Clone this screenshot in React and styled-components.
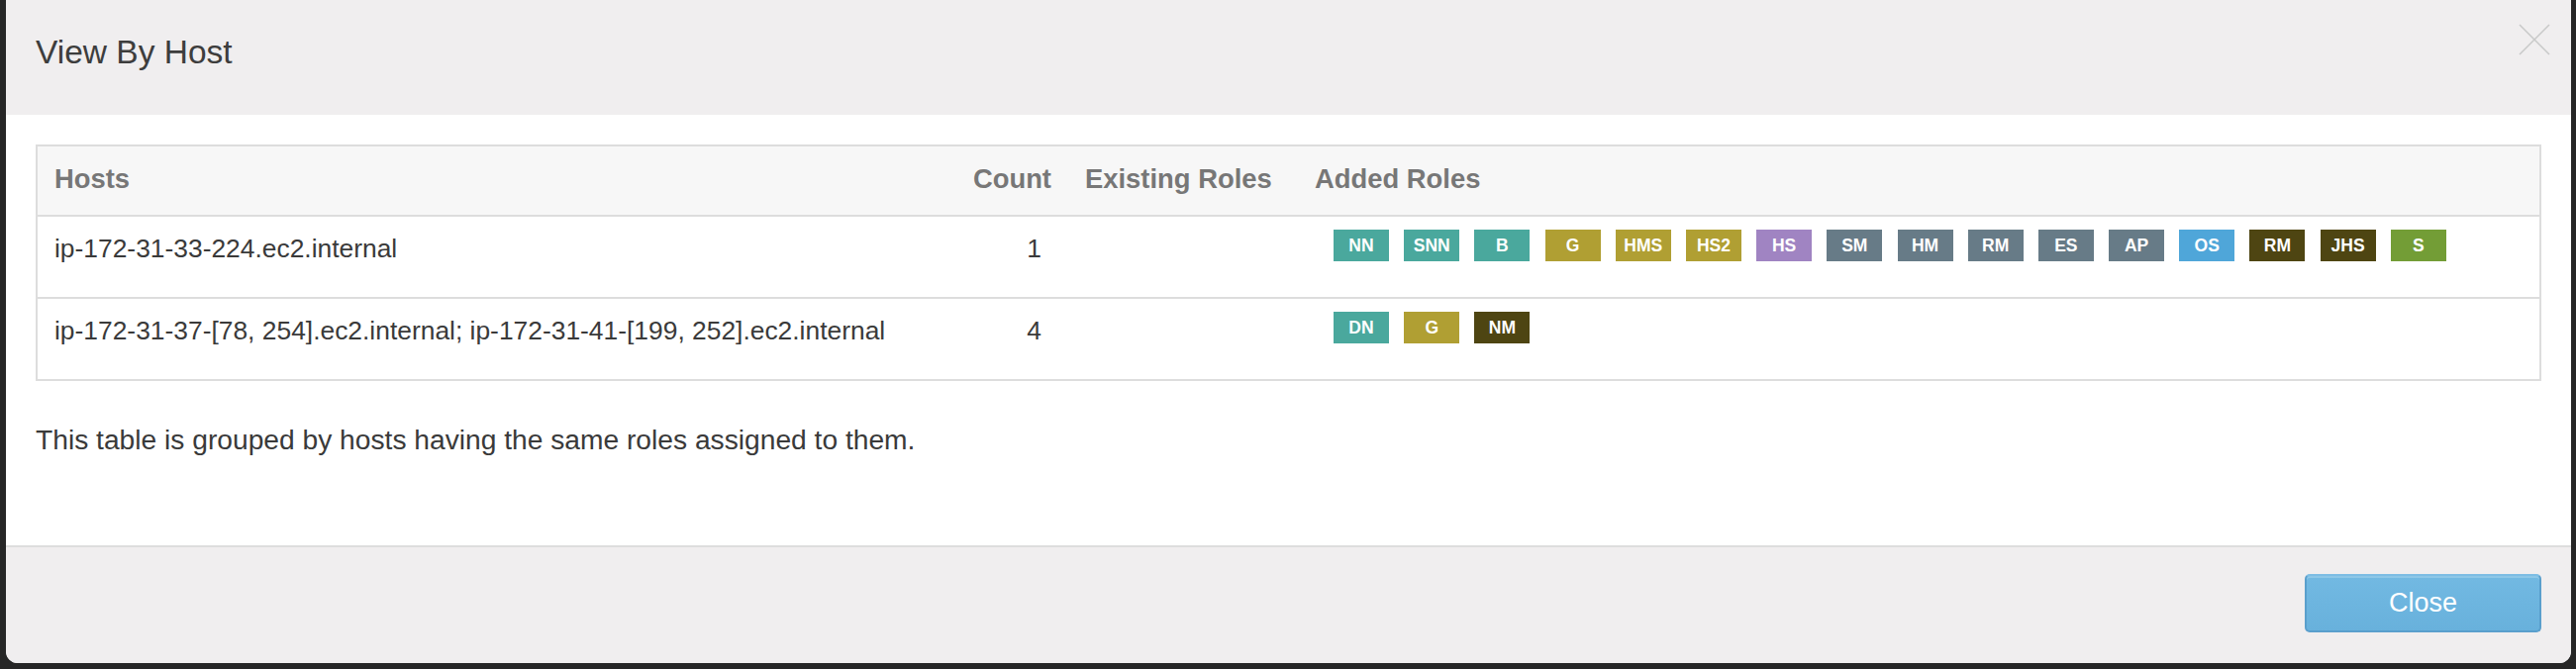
import React from "react";
import styled, { createGlobalStyle } from "styled-components";

const GlobalStyle = createGlobalStyle`
  html, body {
    margin: 0;
    padding: 0;
    background: #262626;
  }
  body {
    font-family: "Liberation Sans", Arial, Helvetica, sans-serif;
  }
`;

const hosts = [
  {
    name: "ip-172-31-33-224.ec2.internal",
    count: 1,
    existing: [],
    added: [
      ["NN", "teal"], ["SNN", "teal"], ["B", "teal"], ["G", "olive"],
      ["HMS", "olive"], ["HS2", "olive"], ["HS", "purple"], ["SM", "slate"],
      ["HM", "slate"], ["RM", "slate"], ["ES", "slate"], ["AP", "slate"],
      ["OS", "blue"], ["RM", "dark"], ["JHS", "dark"], ["S", "green"],
    ],
  },
  {
    name: "ip-172-31-37-[78, 254].ec2.internal; ip-172-31-41-[199, 252].ec2.internal",
    count: 4,
    existing: [],
    added: [["DN", "teal"], ["G", "olive"], ["NM", "dark"]],
  },
];

const roleColors = {
  teal: "#4aa89d",
  olive: "#b09f33",
  purple: "#a084c2",
  slate: "#677b87",
  blue: "#4fa6d9",
  dark: "#4e4512",
  green: "#739d36",
};

const App = () => {
  return (
    <>
      <GlobalStyle />
      <Modal>
        <Header>
          <Title>View By Host</Title>
          <CloseX aria-label="close">
            <svg width="32" height="32" viewBox="0 0 32 32">
              <line x1="1" y1="1" x2="31" y2="31" stroke="#c9c9c9" strokeWidth="1.6" />
              <line x1="31" y1="1" x2="1" y2="31" stroke="#c9c9c9" strokeWidth="1.6" />
            </svg>
          </CloseX>
        </Header>
        <Body>
          <Table>
            <colgroup>
              <col style={{ width: 928 }} />
              <col style={{ width: 114 }} />
              <col style={{ width: 232 }} />
              <col />
            </colgroup>
            <thead>
              <tr>
                <Th>Hosts</Th>
                <Th $right>Count</Th>
                <Th>Existing Roles</Th>
                <Th>Added Roles</Th>
              </tr>
            </thead>
            <tbody>
              {hosts.map((h, i) => (
                <tr key={i}>
                  <Td>{h.name}</Td>
                  <Td $count>{h.count}</Td>
                  <Td />
                  <Td>
                    <Labels>
                      {h.added.map(([label, kind], j) => (
                        <Label key={j} $color={roleColors[kind]}>{label}</Label>
                      ))}
                    </Labels>
                  </Td>
                </tr>
              ))}
            </tbody>
          </Table>
          <Note>This table is grouped by hosts having the same roles assigned to them.</Note>
        </Body>
        <Footer>
          <CloseButton>Close</CloseButton>
        </Footer>
      </Modal>
    </>
  );
};

const Modal = styled.div`
  position: relative;
  margin-left: 6px;
  width: 2591px;
  background: #fff;
  border-radius: 0 0 12px 12px;
  overflow: hidden;
`;

const Header = styled.div`
  background: #f0eeef;
  padding: 35px 30px 45px;
`;

const Title = styled.h4`
  margin: 0;
  font-size: 33.5px;
  line-height: 36px;
  font-weight: 400;
  color: #3d3d3d;
`;

const CloseX = styled.div`
  position: absolute;
  top: 24px;
  right: 21px;
  width: 32px;
  height: 32px;
  line-height: 0;
`;

const Body = styled.div`
  padding: 30px 30px 88px;
`;

const Table = styled.table`
  width: 100%;
  border-collapse: collapse;
  border: 2px solid #ddd;
  table-layout: fixed;
`;

const Th = styled.th`
  background: #f7f7f7;
  border-bottom: 2px solid #ddd;
  padding: 14px 17px 17px;
  font-size: 27.4px;
  line-height: 38px;
  font-weight: 700;
  color: #777;
  text-align: ${(p) => (p.$right ? "right" : "left")};
  white-space: nowrap;
`;

const Td = styled.td`
  border-top: 2px solid #ddd;
  padding: ${(p) => (p.$count ? "13px 27px 30px 17px" : "13px 17px 30px")};
  font-size: 26.4px;
  line-height: 38px;
  color: #3a3a3a;
  vertical-align: top;
  text-align: ${(p) => (p.$count ? "right" : "left")};
  white-space: nowrap;
`;

const Labels = styled.div`
  display: flex;
  gap: 15.2px;
  margin-left: 19px;
`;

const Label = styled.span`
  width: 56px;
  height: 32px;
  background: ${(p) => p.$color};
  color: #fff;
  font-size: 17.5px;
  font-weight: 700;
  line-height: 32px;
  text-align: center;
`;

const Note = styled.p`
  margin: 40px 0 0;
  font-size: 28.2px;
  line-height: 38px;
  color: #3a3a3a;
`;

const Footer = styled.div`
  background: #f0eeef;
  border-top: 2px solid #ddd;
  padding: 27px 30px 31px;
  display: flex;
  justify-content: flex-end;
`;

const CloseButton = styled.button`
  width: 239px;
  height: 59px;
  border: 2px solid #5a9fcc;
  border-top-color: #7dbde4;
  border-radius: 5px;
  background: linear-gradient(#72b9e2, #68b1dc);
  color: #fff;
  font-family: "Liberation Sans", Arial, sans-serif;
  font-size: 27px;
  box-shadow: inset 0 2px 0 rgba(255, 255, 255, 0.2);
`;

export default App;
